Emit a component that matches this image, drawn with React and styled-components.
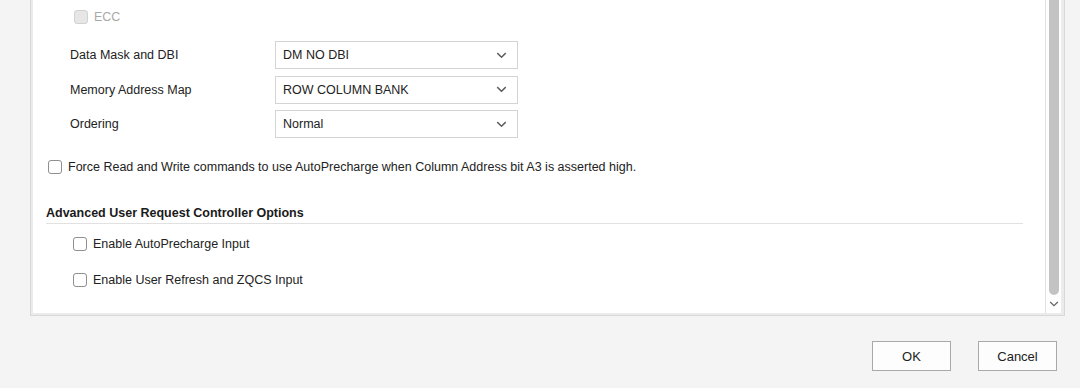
import React from "react";
import styled, { createGlobalStyle } from "styled-components";

const Global = createGlobalStyle`
  html, body { margin: 0; padding: 0; }
  body {
    background: #f4f4f4;
    font-family: "Liberation Sans", Arial, sans-serif;
    color: #222;
  }
  #root { height: 388px; overflow: hidden; }
`;

const Page = styled.div`
  display: flex;
  flex-direction: column;
  height: 388px;
`;

const Panel = styled.div`
  margin-left: 30px;
  width: 1035px;
  height: 316px;
  box-sizing: border-box;
  border: 1px solid #d8d8d8;
  border-top: none;
  box-shadow: inset 2px 0 0 #ebebeb, inset -2px 0 0 #ebebeb, inset 0 -2px 0 #ebebeb;
  background: #fff;
  display: flex;
  padding: 0 2px 2px 2px;
`;

const Content = styled.div`
  flex: 1;
  display: flex;
  flex-direction: column;
  padding-left: 13px;
  padding-right: 22px;
`;

const CheckRow = styled.label`
  display: flex;
  align-items: center;
  gap: 6px;
  height: 14px;
  margin-left: ${(p) => p.$indent || 0}px;
  margin-top: ${(p) => p.$top || 0}px;
  font-size: 12.5px;
  color: ${(p) => (p.$disabled ? "#a9a9a9" : "#222")};
  white-space: nowrap;
`;

const Box = styled.span`
  width: 14px;
  height: 14px;
  box-sizing: border-box;
  border-radius: 3px;
  border: 1px solid ${(p) => (p.$disabled ? "#d2d2d2" : "#8f8f8f")};
  background: ${(p) => (p.$disabled ? "#e6e6e6" : "#fff")};
  flex: none;
`;

const Fields = styled.div`
  display: flex;
  flex-direction: column;
  gap: 6.5px;
  margin-top: 17px;
  margin-left: 24px;
`;

const FieldRow = styled.div`
  display: flex;
  align-items: center;
`;

const FieldLabel = styled.span`
  width: 205px;
  font-size: 12.5px;
  color: #222;
`;

const Select = styled.div`
  width: 243px;
  height: 28px;
  box-sizing: border-box;
  border: 1px solid #d4d4d4;
  display: flex;
  align-items: center;
  justify-content: space-between;
  padding: 0 10px 0 7px;
  font-size: 12.5px;
  color: #222;
  background: #fff;
`;

const Heading = styled.div`
  margin-top: 32px;
  font-size: 12.5px;
  font-weight: bold;
  color: #1a1a1a;
  padding-bottom: 3px;
  border-bottom: 1px solid #e1e1e1;
`;

const Scrollbar = styled.div`
  width: 17px;
  box-sizing: border-box;
  border-left: 1px solid #e2e2e2;
  border-right: 1px solid #ececec;
  display: flex;
  flex-direction: column;
  align-items: center;
`;

const Thumb = styled.div`
  flex: 1;
  width: 10px;
  background: #c3c3c3;
  border-radius: 0 0 5px 5px;
`;

const ArrowBtn = styled.div`
  height: 18px;
  display: flex;
  align-items: center;
  justify-content: center;
`;

const Footer = styled.div`
  display: flex;
  justify-content: flex-end;
  gap: 27px;
  padding: 25px 23px 0 0;
`;

const Button = styled.button`
  width: 79px;
  height: 30px;
  box-sizing: border-box;
  border: 1px solid #a9a9a9;
  background: #fdfdfd;
  font-family: "Liberation Sans", Arial, sans-serif;
  font-size: 13px;
  color: #222;
  padding: 0;
`;

const Chevron = ({ size = 11, color = "#5a5a5a" }) => (
  <svg width={size} height={size * 0.6} viewBox="0 0 11 7" fill="none">
    <path d="M1 1.2 L5.5 5.5 L10 1.2" stroke={color} strokeWidth="1.5" />
  </svg>
);

const fields = [
  ["Data Mask and DBI", "DM NO DBI"],
  ["Memory Address Map", "ROW COLUMN BANK"],
  ["Ordering", "Normal"],
];

export default function App() {
  return (
    <Page>
      <Global />
      <Panel>
        <Content>
          <CheckRow $indent={28} $top={10} $disabled>
            <Box $disabled />
            ECC
          </CheckRow>
          <Fields>
            {fields.map(([label, value]) => (
              <FieldRow key={label}>
                <FieldLabel>{label}</FieldLabel>
                <Select>
                  {value}
                  <Chevron />
                </Select>
              </FieldRow>
            ))}
          </Fields>
          <CheckRow $indent={2} $top={22}>
            <Box />
            Force Read and Write commands to use AutoPrecharge when Column Address bit A3 is asserted high.
          </CheckRow>
          <Heading>Advanced User Request Controller Options</Heading>
          <CheckRow $indent={27} $top={13}>
            <Box />
            Enable AutoPrecharge Input
          </CheckRow>
          <CheckRow $indent={27} $top={22}>
            <Box />
            Enable User Refresh and ZQCS Input
          </CheckRow>
        </Content>
        <Scrollbar>
          <Thumb />
          <ArrowBtn>
            <Chevron size={10} color="#666" />
          </ArrowBtn>
        </Scrollbar>
      </Panel>
      <Footer>
        <Button>OK</Button>
        <Button>Cancel</Button>
      </Footer>
    </Page>
  );
}
